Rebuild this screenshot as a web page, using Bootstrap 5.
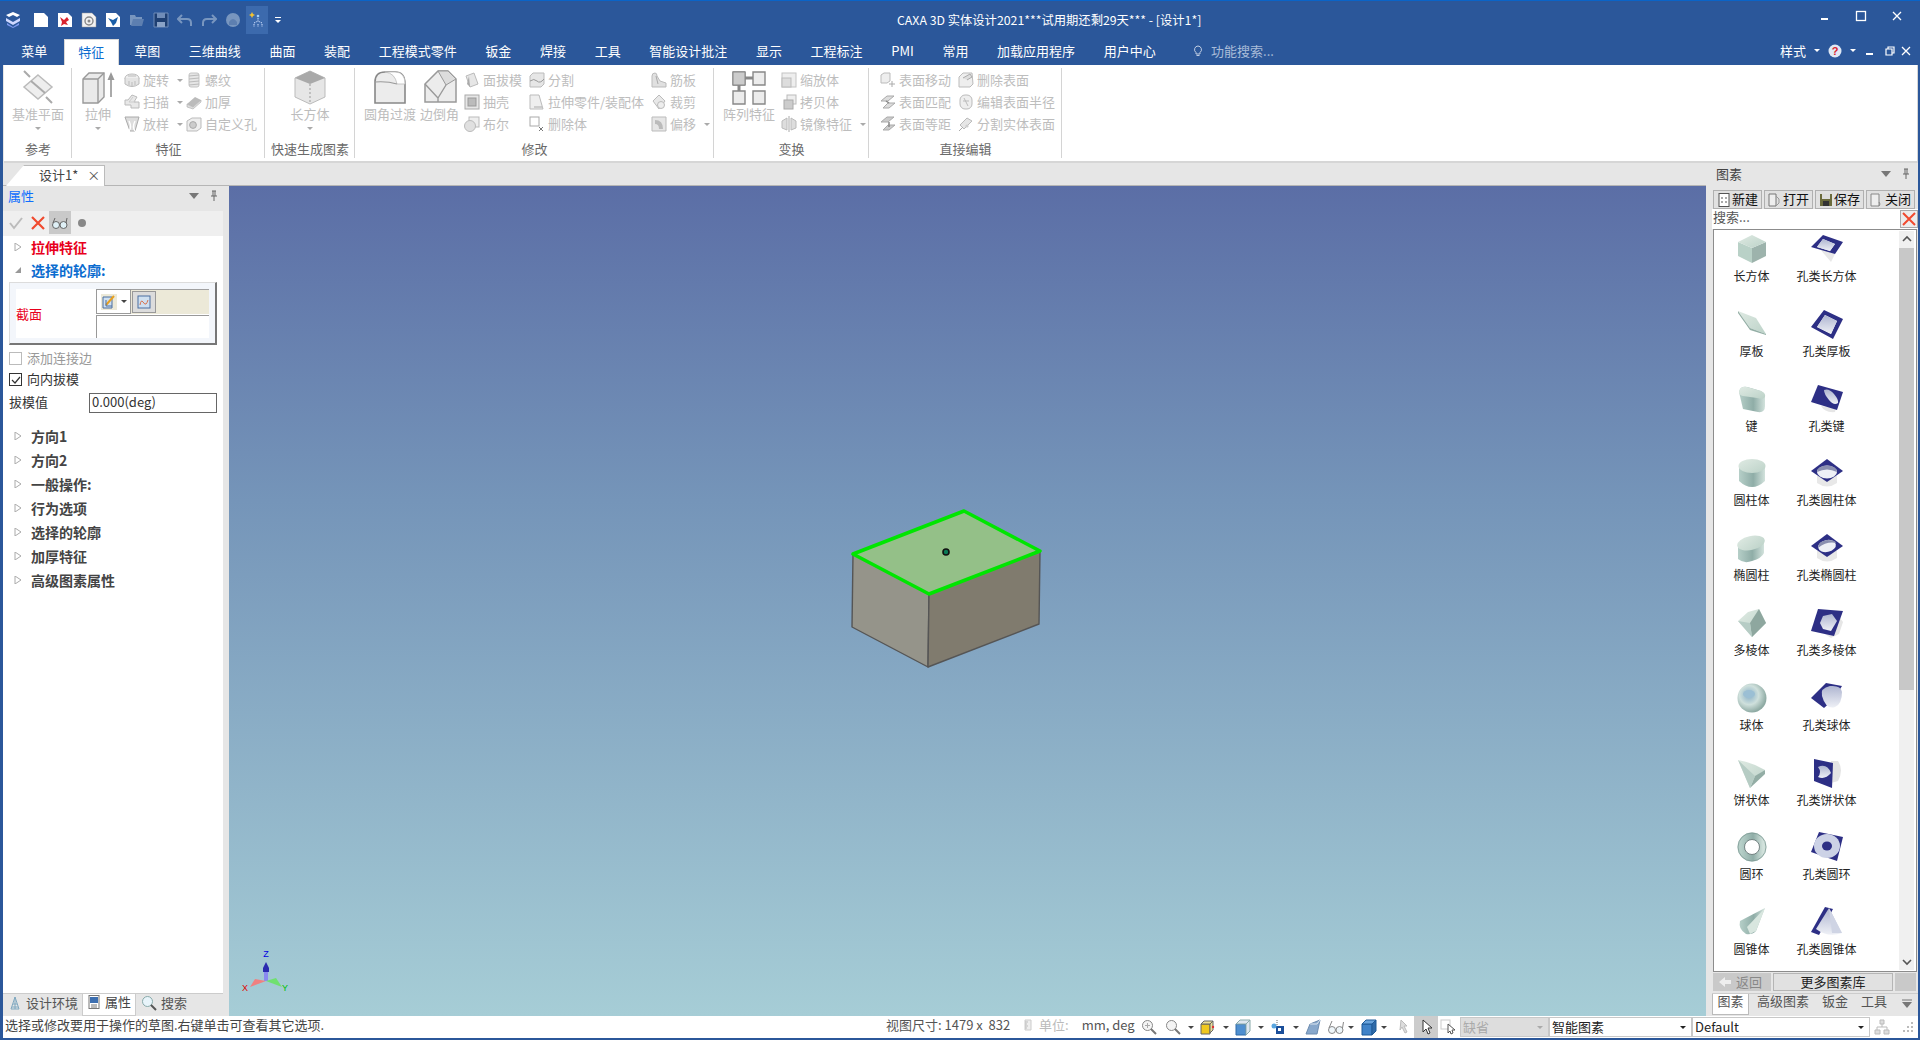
<!doctype html>
<html lang="zh">
<head>
<meta charset="utf-8">
<title>CAXA 3D</title>
<link href="https://cdn.jsdelivr.net/npm/bootstrap@5.3.0/dist/css/bootstrap.min.css" rel="stylesheet">
<style>
html,body{height:100%;margin:0;overflow:hidden}
body{font-family:"Noto Sans CJK SC","Noto Sans",sans-serif;font-size:13px;line-height:18px;color:#444;background:#e6e6e6}
.appwin{height:1040px;width:1920px;border-left:3px solid #2b579a;border-right:2px solid #2b579a;border-bottom:2px solid #2b579a}
svg{display:block;flex:none}
.i12{width:12px;height:12px}.i14{width:14px;height:14px}.i16{width:16px;height:16px}.i18{width:18px;height:18px}.i20{width:20px;height:20px}.i30{width:30px;height:30px}.i32{width:32px;height:30px}.i36{width:36px;height:36px}
.tribar{width:0;height:0;border-left:3px solid transparent;border-right:3px solid transparent;border-top:3px solid currentColor;display:block;flex:none}
.titlebar{height:39px;background:#2b579a;border-top:1px solid #0a64c8;color:#fff;margin-left:-3px;margin-right:-2px}
.qat{width:897px;padding-left:0}
.qatcell{width:24px;height:28px;display:flex;align-items:center;justify-content:center;flex:none}
.qatcell.logo{width:25px;margin-right:4px}
.qatcell.hot{background:#3c6aad;width:22px;margin:0 1px}
.qatmore{width:18px;gap:2px;flex-direction:column}
.qbar{width:6px;height:1px;background:#fff;display:block}
.wtitle{font-size:12.3px;white-space:nowrap}
.winbtns{padding-right:5px;margin-bottom:8px}
.winbtn{width:36px;display:flex;justify-content:center}
.tabbar{height:26px;background:#2b579a;color:#fff;padding-left:8px;gap:2px;margin-left:-3px;margin-right:-2px}
.rtab{padding:0 13.32px;height:26px;line-height:23px;white-space:nowrap;color:#fff}
.rtab.on{background:#fff;color:#0b6ccf;margin-left:1px;border:1px solid #d8d8d8;border-bottom:0;padding:0 13.6px}
.tipsearch{margin-left:21px;color:#a9bcd8;gap:7px;padding-bottom:3px}
.tabright{padding-right:8px;padding-bottom:3px}
.ribbon{height:98px;background:#fff;border-bottom:2px solid #d6d6d6;margin-left:1px;border-right:1px solid #d6d6d6;flex:none}
.rgroup{display:flex;flex-direction:column;position:relative;flex:none;height:96px;color:#bdbdbd}
.rgroup::after{content:"";position:absolute;right:0;top:3px;bottom:3px;width:1px;background:#d4d4d4}
.rbody{height:74px;display:flex;padding-top:4px}
.rlabel{height:20px;line-height:20px;text-align:center;color:#6a6a6a}
.g1{width:68px}.g2{width:193px}.g3{width:90px}.g4{width:359px}.g5{width:155px}.g6{width:193px}
.g4 .rbody,.g5 .rbody{padding-left:9px}.g6 .rbody{padding-left:11px}
.bigbtn{display:flex;flex-direction:column;align-items:center;flex:none;white-space:nowrap}
.bigbtn .tribar{margin-top:4px;color:#aaa}
.bw68{width:68px}.bw52{width:52px}.bw90{width:90px}.bw39{width:39px;margin:0 5px 0 4px}.bw52b{width:52px;margin-right:6px}
.bigcap{height:18px;line-height:18px}
.scol{flex:none}
.sw62{width:62px}.sw65{width:65px}.sw122{width:122px}.sw78{width:78px}
.srow{height:22px;display:flex;align-items:center;gap:3px;white-space:nowrap}
.srow .tribar{margin-left:5px;color:#aaa}
.docstrip{height:23px;background:#e6e6e6;padding-right:16px;flex:none;border-bottom:1px solid #b5b5b5}
.doctab{width:99px;height:21px;margin-top:2px;margin-left:3px;background:#fff;border:1px solid #bbb;border-bottom:0;border-left:0;position:relative;color:#444;padding-left:33px;line-height:18px;clip-path:polygon(18px 0,100% 0,100% 100%,0 100%)}
.doctabx{margin-left:9px;color:#555}
.mainrow{height:830px;flex:none}
.leftpane{width:220px;flex:none;background:#e6e6e6}
.panehead{height:25px;background:#e6e6e6;padding:0 3px 5px 5px;flex:none}
.panetools{height:25px;background:#efefef;padding:0 0 2px 2px;flex:none}
.tcell{width:22px;height:23px;display:flex;align-items:center;justify-content:center}
.tcell.hot{background:#c9c9c9}
.leftbody{flex-grow:1;background:#fff}
.secrow{height:24px;display:flex;align-items:center;padding:0 0 2px 11px;gap:9px;font-weight:700;font-size:14px}
.secrow svg{width:8px;height:8px}
.sec-r{color:#e8001c}.sec-b{color:#0b6ccf;height:22px}
.profbox{height:63px;margin:0 6px;border:1px solid #dcdcdc;border-right:2px solid #777;border-bottom:2px solid #777;background:#f3f6fb;padding:6px 6px 5px 6px}
.profin{height:100%;background:#fff}
.proflab{width:80px;color:#e8001c;display:flex;align-items:center}
.profsel{flex-grow:1;display:flex;flex-direction:column}
.proftop{height:25px;background:#ece9d8;border-top:1px solid #a0a0a0;display:flex;gap:1px}
.profbtn{width:35px;background:#fff;border:1px solid #9a9a9a;display:flex;align-items:center;justify-content:center;gap:4px;margin-top:-1px}
.profbtn2{width:24px;height:22px;background:#dcdcdc;border:1px solid #999;display:flex;align-items:center;justify-content:center;margin-top:1px}
.profin2{flex-grow:1;border-top:1px solid #999;border-left:1px solid #999;margin-top:1px}
.chkrow{height:21px;display:flex;align-items:center;padding-left:6px;gap:5px;color:#333}
.chkrow .chktx{margin-bottom:2px}
.chkfirst{margin-top:3px}
.chkbx{width:13px;height:13px;border:1px solid #333;background:#fff;display:flex;align-items:center;justify-content:center}
.chkoff{border-color:#bbb}.txoff{color:#999}
.draftrow{height:21px;display:flex;align-items:center;padding-left:6px;margin-top:2px;margin-bottom:12px;color:#333}
.draftlab{width:80px;margin-bottom:2px}
.draftin.form-control{width:128px;height:20px;min-height:0;border:1px solid #666;border-radius:0;padding:0 2px 2px;font-size:13px;line-height:16px;color:#333;font-family:inherit;background:#fff}
.panetabs{height:23px;background:#e6e6e6;border-top:1px solid #ccc;flex:none;color:#555}
.ptab{height:22px;display:flex;align-items:center;gap:4px;padding:0 5px 5px}
.ptab.first{padding-right:4px}
.ptab.on{background:#fff;border:1px solid #ccc;border-top:0;color:#444;padding:0 4px 5px}
.canvasgap{width:6px;flex:none;background:#e6e6e6}
.viewport3d{width:1477px;flex:none;background:linear-gradient(#5b6ea6,#7595b9 38%,#a6cdd6)}
.viewport3d svg{width:1477px;height:830px}
.rightpane{width:212px;flex:none;background:#e6e6e6;margin-top:-23px;position:relative;padding-left:6px}
.rhead{height:23px;padding:0 6px 1px 4px;color:#444;flex:none}
.libbtns{height:19px;gap:2px;padding-left:1px;padding-right:1px;flex:none;margin-top:4px}
.libbtn.btn{width:49px;height:19px;padding:0 0 3px;border-radius:0;border:1px solid #b0b0b0;background:#e1e1e1;color:#111;font-size:13px;line-height:15px;display:flex;align-items:center;justify-content:center;gap:1px;font-family:inherit}
.libbtn.btn svg{margin-top:3px}
.libsearch{height:20px;background:#fff;flex:none;padding-left:1px;position:relative;color:#555}
.libsearch>span:first-child{margin-bottom:4px}
.libx{width:18px;height:18px;border:1px solid #aaa;background:#ececec;display:flex;align-items:center;justify-content:center}
.libbox{height:743px;border:1px solid #8c8c8c;background:#fff;flex:none;margin-left:1px;margin-right:1px;position:relative}
.libgrid{display:grid;grid-template-columns:75px 75px;grid-auto-rows:74.8px;width:185px;padding-top:4px}
.libcell{display:flex;flex-direction:column;align-items:center;color:#222;font-size:12px;white-space:nowrap}
.libcell span{display:block;margin-top:3px}
.vscroll{width:15px;background:#f0f0f0;flex:none;margin-right:2px;margin-top:1px;margin-bottom:1px}
.vsbtn{height:16px;display:flex;align-items:center;justify-content:center}
.vsthumb{height:442px;background:#c8c8c8;margin-top:1px}
.libfoot{height:20px;gap:2px;flex:none;margin:1px 1px 0}
.backbtn{width:58px;height:18px;background:#c9c9c9;color:#888;padding-left:5px;gap:4px;flex:none}
.morebtn.btn{width:120px;height:18px;padding:0;border-radius:0;border:1px solid #b5b5b5;background:#e1e1e1;color:#222;font-size:13px;line-height:16px;font-family:inherit}
.plainb{width:21px;height:18px;background:#c9c9c9}
.rtabs{height:22px;flex:none;color:#555;gap:13px;border-top:1px solid #ccc;padding-right:5px}
.rtabx{height:21px;line-height:14px}
.rtabx.on{background:#fff;border:1px solid #bbb;border-top:0;width:37px;text-align:center;margin-right:-5px}
.statbar{height:22px;background:#fff;flex:none;color:#444;white-space:nowrap;position:relative}
.stext{width:883px;padding-left:2px;color:#444;flex:none;margin-bottom:4px}
.ssize{width:136px;flex:none;color:#555;margin-bottom:4px}
.sunit{width:117px;gap:5px;color:#bbb;flex:none;margin-bottom:4px}
.sunit b{font-weight:400;color:#555;margin-left:8px}
.sic{width:20px;height:22px;display:flex;align-items:center;justify-content:center;flex:none}
.sic.gap3{margin-left:3px}.sic.gap4{margin-left:4px}
.sar{width:15px;height:22px;display:flex;align-items:center;justify-content:center;flex:none;color:#444}
.sar.tiny{width:10px}
.sact{width:24px;height:22px;background:#ccc;display:flex;align-items:center;justify-content:center;margin-left:1px;flex:none}
.scmb{height:20px;border:1px solid #c8c8c8;background:#fff;display:flex;align-items:center;padding:0 5px 0 2px;justify-content:space-between;flex:none;color:#222}
.c1{width:89px;background:#ddd;color:#aaa;margin-left:2px}.c2{width:143px}.c3{width:178px}
.stail{gap:8px;padding-left:4px}
</style>
</head>
<body>
<svg width="0" height="0" class="position-absolute">
<defs>
<linearGradient id="gt" x1="0" y1="0" x2="1" y2="1"><stop offset="0" stop-color="#dfeae3"/><stop offset="1" stop-color="#bcd2c8"/></linearGradient>
<linearGradient id="gs" x1="0" y1="0" x2="1" y2="0"><stop offset="0" stop-color="#b6cfc8"/><stop offset=".55" stop-color="#8fada7"/><stop offset="1" stop-color="#d2e2dc"/></linearGradient>
<radialGradient id="gb" cx=".4" cy=".4" r=".6"><stop offset="0" stop-color="#86aec6"/><stop offset=".55" stop-color="#cfe0dc"/><stop offset="1" stop-color="#8eaaa3"/></radialGradient>
<linearGradient id="gh" x1="0" y1="0" x2="0" y2="1"><stop offset="0" stop-color="#aeb5d0"/><stop offset="1" stop-color="#eef0f6"/></linearGradient>

<symbol id="b-plane" viewBox="0 0 36 36"><path d="M4 2l6 6M32 34l-6-6" stroke="#aaa" stroke-width="2"/><path d="M18 6L32 18 18 30 4 18z" fill="#eee" stroke="#bbb" stroke-width="1.5"/><path d="M11 12l14 12" stroke="#aaa" stroke-width="2"/></symbol>
<symbol id="b-ext" viewBox="0 0 36 36"><path d="M3 10l6-6h15v24l-6 6H3z" fill="#eaeaea" stroke="#999" stroke-width="1.4"/><path d="M3 10h15v24M18 10l6-6" fill="none" stroke="#999" stroke-width="1.4"/><path d="M31 28V10" stroke="#aaa" stroke-width="2"/><path d="M31 3l3.500 8h-7z" fill="#999"/></symbol>
<symbol id="b-box" viewBox="0 0 36 36"><path d="M18 2L33 9v19l-15 7-15-7V9z" fill="#e6e6e6" stroke="#bbb"/><path d="M18 2L33 9 18 15 3 9z" fill="#a9a9a9"/><path d="M18 15v20" stroke="#999" stroke-dasharray="2 2"/></symbol>
<symbol id="b-fillet" viewBox="0 0 36 36"><path d="M3 34V13Q3 3 13 3h10q10 0 10 12v19z" fill="#ececec" stroke="#888" stroke-width="1.6"/><path d="M13 3q10 1 12 12l8 0Q33 3 23 3z" fill="#fff" stroke="#bbb" stroke-width=".8"/><path d="M3 13q12-1 22 2" fill="none" stroke="#999" stroke-width="1.2"/></symbol>
<symbol id="b-chamf" viewBox="0 0 36 36"><path d="M3 15L16 2h10l8 8v23H3z" fill="#ececec" stroke="#999" stroke-width="1.5"/><path d="M16 2l8 14 10-6-8-8z" fill="#dcdcdc" stroke="#999"/><path d="M3 15l13 14v4M24 16l-8 13" fill="none" stroke="#999" stroke-width="1.4"/></symbol>
<symbol id="b-patt" viewBox="0 0 36 36"><path d="M2 3h12v13H2zM22 3h12v13H22zM2 22h12v13H2zM22 22h12v13H22z" fill="#ececec" stroke="#888" stroke-width="1.4"/><path d="M2 3h12v13H2z" fill="#ccc" stroke="#888"/><path d="M14 9h8M8 16v6" stroke="#888" stroke-width="3"/></symbol>

<symbol id="s-rev" viewBox="0 0 16 16"><ellipse cx="8" cy="6" rx="7" ry="4" fill="#eee" stroke="#bbb"/><path d="M1 6v6q7 5 14 0V6" fill="#e4e4e4" stroke="#bbb"/><path d="M4 4h8M5 9v4M8 10v4M11 9v4" stroke="#bbb"/></symbol>
<symbol id="s-swp" viewBox="0 0 16 16"><path d="M8 1l5 2-3 5h5v6H7v-3H1V6h3z" fill="#e8e8e8" stroke="#bbb"/><path d="M9 3L5 8h7" fill="none" stroke="#ccc"/></symbol>
<symbol id="s-lft" viewBox="0 0 16 16"><path d="M1 1h14l-4 14H6z" fill="#ddd" stroke="#aaa"/><path d="M5 5q3 6 0 10M11 5q-3 6 0 10" stroke="#fff" fill="none" stroke-width="1.4"/></symbol>
<symbol id="s-thr" viewBox="0 0 16 16"><rect x="3" y="1" width="10" height="14" rx="2" fill="#e6e6e6" stroke="#c4c4c4"/><path d="M3 4l10-1M3 7l10-1M3 10l10-1M3 13l10-1" stroke="#bbb"/></symbol>
<symbol id="s-thk" viewBox="0 0 16 16"><path d="M1 10l8-7 6 3-8 7z" fill="#bbb"/><path d="M1 10v3l6 2 8-7V6l-8 7z" fill="#ddd" stroke="#aaa" stroke-width=".6"/></symbol>
<symbol id="s-hole" viewBox="0 0 16 16"><path d="M1 5l5-3h9v10l-4 3H1z" fill="#eee" stroke="#bbb"/><circle cx="7" cy="9" r="3.400" fill="#ccc" stroke="#aaa"/></symbol>
<symbol id="s-drft" viewBox="0 0 16 16"><path d="M2 4l8-3 4 11-8 3z" fill="#e6e6e6" stroke="#bbb"/><path d="M5 4l-2 8 3 3" fill="#aaa"/></symbol>
<symbol id="s-shl" viewBox="0 0 16 16"><rect x="1" y="1" width="14" height="14" fill="#e6e6e6" stroke="#aaa"/><rect x="4" y="4" width="8" height="8" fill="#bbb" stroke="#999"/></symbol>
<symbol id="s-bool" viewBox="0 0 16 16"><rect x="5" y="1" width="10" height="10" fill="#eee" stroke="#bbb"/><circle cx="6" cy="10" r="5.500" fill="#e0e0e0" stroke="#bbb"/></symbol>
<symbol id="s-spl" viewBox="0 0 16 16"><path d="M1 4l3-3h11v11l-3 3H1z" fill="#e6e6e6" stroke="#bbb"/><path d="M1 9q4-3 7 0t7-2" fill="none" stroke="#999"/></symbol>
<symbol id="s-asm" viewBox="0 0 16 16"><path d="M1 1h9l4 14H1z" fill="#eee" stroke="#bbb"/><path d="M5 13h8" stroke="#aaa"/></symbol>
<symbol id="s-del" viewBox="0 0 16 16"><rect x="1" y="1" width="9" height="9" fill="#fff" stroke="#aaa"/><path d="M10 11l4 4M14 11l-4 4" stroke="#777"/></symbol>
<symbol id="s-rib" viewBox="0 0 16 16"><path d="M1 15V4q0-3 3-3 2 0 2 3l3 5 6 2v4z" fill="#e0e0e0" stroke="#bbb"/><path d="M5 4l2 8" stroke="#aaa"/></symbol>
<symbol id="s-trm" viewBox="0 0 16 16"><path d="M8 1l6 6-6 8-6-8z" fill="#e8e8e8" stroke="#bbb"/><circle cx="10" cy="11" r="3.500" fill="#eee" stroke="#bbb"/></symbol>
<symbol id="s-off" viewBox="0 0 16 16"><path d="M1 1h14v14H1z" fill="#e6e6e6" stroke="#bbb"/><path d="M4 4q8 0 8 9H8q0-5-4-5z" fill="#bbb"/></symbol>
<symbol id="s-scl" viewBox="0 0 16 16"><rect x="1" y="1" width="14" height="14" fill="#eee" stroke="#c4c4c4"/><rect x="1" y="6" width="9" height="9" fill="#ddd" stroke="#bbb"/></symbol>
<symbol id="s-cpy" viewBox="0 0 16 16"><rect x="6" y="1" width="9" height="9" fill="#eee" stroke="#bbb"/><rect x="3" y="6" width="9" height="9" fill="#ccc" stroke="#aaa"/></symbol>
<symbol id="s-mir" viewBox="0 0 16 16"><path d="M1 5l5-3v12l-5-2zM15 5l-5-3v12l5-2z" fill="#ddd" stroke="#bbb"/><path d="M8 0v16" stroke="#aaa"/></symbol>
<symbol id="s-mov" viewBox="0 0 16 16"><path d="M1 3l3-2h6v8l-3 2H1z" fill="#eee" stroke="#bbb"/><path d="M9 12h6M12 9v6" stroke="#aaa"/></symbol>
<symbol id="s-mat" viewBox="0 0 16 16"><path d="M1 7l6-5h7L8 7zM3 14l5-5h7l-6 5z" fill="#ddd" stroke="#aaa"/><path d="M6 7l3 2" stroke="#888" stroke-width="1.5"/></symbol>
<symbol id="s-equ" viewBox="0 0 16 16"><path d="M1 6l6-5h7L8 6zM3 14l5-5h7l-6 5z" fill="#ccc" stroke="#aaa"/><path d="M9 6v5" stroke="#888" stroke-width="1.5"/></symbol>
<symbol id="s-dlf" viewBox="0 0 16 16"><path d="M1 5l4-4h9l1 11-3 3H1z" fill="#eee" stroke="#bbb"/><path d="M5 6l7-4 2 3-5 3" fill="#ddd" stroke="#aaa"/></symbol>
<symbol id="s-rad" viewBox="0 0 16 16"><rect x="2" y="1" width="12" height="14" rx="5" fill="#eee" stroke="#bbb"/><path d="M6 4l4 8M5 7h6" stroke="#bbb"/></symbol>
<symbol id="s-spf" viewBox="0 0 16 16"><path d="M2 9l7-7 5 3-8 8z" fill="#e6e6e6" stroke="#bbb"/><path d="M1 15l4-4" stroke="#aaa"/><circle cx="9" cy="10" r="1.600" fill="#ccc"/></symbol>

<symbol id="g1" viewBox="0 0 30 30"><path d="M1 8L15 14v15L1 22z" fill="#b9d1c7"/><path d="M15 14l14-6v14l-14 7z" fill="#9db3ac"/><path d="M15 1L29 8 15 14 1 8z" fill="url(#gt)"/></symbol>
<symbol id="g2" viewBox="0 0 30 30"><path d="M1 2l18 7 10 16-16-6z" fill="url(#gt)"/><path d="M1 2v2l12 17 16 5v-1l-16-6z" fill="#93aea5"/></symbol>
<symbol id="g3" viewBox="0 0 30 30"><path d="M2 8q1-6 8-5l14 4q4 2 4 7v8q0 7-7 6l-15-3z" fill="url(#gs)"/><path d="M2 8q1-6 8-5l14 4q5 2 4 6-1 3-8 1L6 12Q2 11 2 8z" fill="url(#gt)"/></symbol>
<symbol id="g4" viewBox="0 0 30 30"><path d="M2 8v15q13 12 26 0V8z" fill="url(#gs)"/><ellipse cx="15" cy="8" rx="13.500" ry="7" fill="url(#gt)"/></symbol>
<symbol id="g5" viewBox="0 0 30 30"><path d="M1 14v12q6 5 14 2 10-3 12-8V5z" fill="url(#gs)"/><ellipse cx="14" cy="10" rx="14" ry="7" transform="rotate(-12 14 10)" fill="url(#gt)"/></symbol>
<symbol id="g6" viewBox="0 0 30 30"><path d="M1 13L11 4 22 1l7 14-14 14z" fill="url(#gt)"/><path d="M22 1l7 14-14 14-2-14z" fill="#8ea79f"/><path d="M13 15L1 13l14 16z" fill="#b6ccc5"/></symbol>
<symbol id="g7" viewBox="0 0 30 30"><circle cx="15" cy="15" r="14.500" fill="url(#gb)"/><ellipse cx="12" cy="11" rx="6" ry="4" fill="#9bbfd4"/></symbol>
<symbol id="g8" viewBox="0 0 30 30"><path d="M1 2q16 3 27 10L18 19 13 30z" fill="url(#gt)"/><path d="M28 12v4l-15 14 5-12z" fill="#93ada5"/><path d="M1 2l12 28 5-12z" fill="#b6ccc4"/></symbol>
<symbol id="g9" viewBox="0 0 30 30"><circle cx="15" cy="15" r="11" fill="none" stroke="url(#gs)" stroke-width="7"/><circle cx="15" cy="15" r="14" fill="none" stroke="#7f9a95" stroke-width=".8"/><circle cx="15" cy="15" r="7.500" fill="#fff" stroke="#566" stroke-width=".8"/></symbol>
<symbol id="g10" viewBox="0 0 30 30"><path d="M28 1L3 14q-2 8 6 13 6 1 10-3z" fill="url(#gs)"/><path d="M28 1L10 20l3 7 6-3z" fill="#d8e6df"/></symbol>

<symbol id="h1" viewBox="0 0 32 30"><path d="M8 14l12 14 4-8z" fill="#e8e8e8"/><path d="M12 1l20 7-8 12L0 13z M12 5L6 13l13 4 5-7z" fill="#2d2f85" fill-rule="evenodd"/><path d="M12 5L6 13l13 4 5-7z" fill="url(#gh)"/></symbol>
<symbol id="h2" viewBox="0 0 32 30"><path d="M13 1l19 9-10 20L0 18z M14 6L6 18l14 7 6-13z" fill="#2d2f85" fill-rule="evenodd"/><path d="M14 6L6 18l14 7 6-13z" fill="url(#gh)"/></symbol>
<symbol id="h3" viewBox="0 0 32 30"><path d="M10 22q4 7 14 6l1-4z" fill="#e6e6e6"/><path d="M7 1l25 7-6 18L0 18z" fill="#2d2f85"/><path d="M13 6q5-2 10 4t4 9q-4 3-9-3T13 6z" fill="url(#gh)"/></symbol>
<symbol id="h4" viewBox="0 0 32 30"><path d="M6 18v7q10 7 20 0v-7z" fill="#e8e8e8"/><path d="M16 1l16 12-16 11L0 13z" fill="#2d2f85"/><ellipse cx="16" cy="14" rx="10" ry="6.500" fill="#eef0f6"/><path d="M6 14q0-6 10-6.500 10 .5 10 6.500-10-5-20 0z" fill="#8a8fb0"/></symbol>
<symbol id="h5" viewBox="0 0 32 30"><path d="M6 18v7q10 7 20 0v-7z" fill="#e8e8e8"/><path d="M16 1l16 12-16 11L0 13z" fill="#2d2f85"/><ellipse cx="16" cy="13" rx="9" ry="6" transform="rotate(-12 16 13)" fill="#eef0f6"/><path d="M7 15q0-7 9-8 9 0 9 3-9-2-18 5z" fill="#8a8fb0"/></symbol>
<symbol id="h6" viewBox="0 0 32 30"><path d="M26 6l6 8-4 12-8 4-6-4z" fill="#e6e6e6"/><path d="M7 1l25 2-9 25L0 23z" fill="#2d2f85"/><path d="M12 8l9-2 5 7-6 10-8-2-3-6z" fill="url(#gh)"/></symbol>
<symbol id="h7" viewBox="0 0 32 30"><path d="M0 15L15 0l16 3-8 13-10 9z" fill="#2d2f85"/><path d="M11 13q-2-8 8-10 11-1 12 6 0 12-7 15-9 3-13-11z" fill="url(#gh)"/></symbol>
<symbol id="h8" viewBox="0 0 32 30"><path d="M20 3h7q6 9 0 20l-7 2z" fill="#e4e4e4"/><path d="M3 1l19 4-1 25-18-7z" fill="#2d2f85"/><path d="M7 9q9-4 13 6-6 7-13 4 4-5 0-10z" fill="url(#gh)"/></symbol>
<symbol id="h9" viewBox="0 0 32 30"><path d="M8 0l24 5-6 24L0 20z" fill="#2d2f85"/><ellipse cx="16" cy="14" rx="13" ry="12" fill="#ccd2e6"/><ellipse cx="16" cy="14" rx="5" ry="4.500" fill="#2d2f85"/></symbol>
<symbol id="h10" viewBox="0 0 32 30"><path d="M0 25L14 0l8 2L8 28z" fill="#2d2f85"/><path d="M18 1L5 22q12 9 26 4z" fill="url(#gh)"/><path d="M18 1l13 25-10 0z" fill="#cfd4e4"/></symbol>
</defs>
</svg>

<div class="appwin d-flex flex-column">
  <div class="titlebar d-flex align-items-center flex-none">
    <div class="qat d-flex align-items-center">
      <div class="qatcell logo"><svg class="i18" viewBox="0 0 18 18"><path d="M9 1l7 3-3 2-4-2-4 2-3-2z" fill="#fff"/><path d="M2 7l7 4 7-4v3l-7 4-7-4z" fill="#cfd8ff"/><path d="M3 12l6 4 6-4v2l-6 3-6-3z" fill="#7f9bef"/></svg></div>
      <div class="qatcell"><svg class="i16" viewBox="0 0 16 16"><path d="M1 1h10l4 4v10H1z" fill="#fff"/></svg></div>
      <div class="qatcell"><svg class="i16" viewBox="0 0 16 16"><path d="M1 1h10l4 4v10H1z" fill="#fff"/><path d="M3 5l4 3 3-3 2 3-3 2 2 3-4-1-3 2 1-4z" fill="#d9232e"/></svg></div>
      <div class="qatcell"><svg class="i16" viewBox="0 0 16 16"><path d="M1 1h10l4 4v10H1z" fill="#f2f2f2" stroke="#999" stroke-width=".5"/><circle cx="8" cy="9" r="4" fill="none" stroke="#888" stroke-width="1.4"/><circle cx="8" cy="9" r="1.500" fill="#888"/></svg></div>
      <div class="qatcell"><svg class="i16" viewBox="0 0 16 16"><path d="M1 1h10l4 4v10H1z" fill="#fff"/><path d="M3 6l5 2 5-3-2 6-3 3-2-4z" fill="#1b5fa8"/></svg></div>
      <div class="qatcell"><svg class="i16" viewBox="0 0 16 16"><path d="M1 3h5l1 2h6v2H5l-2 6H1z" fill="#7896bf"/><path d="M4 7h11l-2 7H2z" fill="#5d7fb0"/></svg></div>
      <div class="qatcell"><svg class="i16" viewBox="0 0 16 16"><path d="M1 1h14v14H1z" fill="#1e3f72" stroke="#6f8cb8"/><path d="M4 1h8v5H4z" fill="#6f8cb8"/><path d="M4 10h8v5H4z" fill="#8aa3c7"/></svg></div>
      <div class="qatcell"><svg class="i16" viewBox="0 0 16 16"><path d="M5 3L1 7l4 4" fill="none" stroke="#7896bf" stroke-width="2"/><path d="M2 7h8q4 0 4 4v3" fill="none" stroke="#7896bf" stroke-width="2"/></svg></div>
      <div class="qatcell"><svg class="i16" viewBox="0 0 16 16"><path d="M11 3l4 4-4 4" fill="none" stroke="#7896bf" stroke-width="2"/><path d="M14 7H6q-4 0-4 4v3" fill="none" stroke="#7896bf" stroke-width="2"/></svg></div>
      <div class="qatcell"><svg class="i16" viewBox="0 0 16 16"><circle cx="8" cy="8" r="7" fill="#7896bf"/><path d="M4 10q4-6 8 0v3H4z" fill="#5d7fb0"/></svg></div>
      <div class="qatcell hot"><svg class="i18" viewBox="0 0 18 18"><path d="M4 1l1 2 2 1-2 1-1 2-1-2-2-1 2-1z" fill="#f2c230"/><path d="M10 7v3M6 13v3M10 13v3M14 13v3M6 12l4-2 4 2" stroke="#cfe0ff" fill="none" stroke-dasharray="1.5 1"/><circle cx="10" cy="5" r="1.300" fill="#9fd0ff"/></svg></div>
      <div class="qatcell qatmore"><span class="qbar"></span><span class="tribar"></span></div>
    </div>
    <div class="wtitle">CAXA 3D 实体设计2021***试用期还剩29天*** - [设计1*]</div>
    <div class="winbtns d-flex align-items-center ms-auto">
      <div class="winbtn"><svg class="i12" viewBox="0 0 12 12"><path d="M2 9h7" stroke="#fff" stroke-width="2"/></svg></div>
      <div class="winbtn"><svg class="i12" viewBox="0 0 12 12"><rect x="1.500" y="1.500" width="9" height="9" fill="none" stroke="#fff" stroke-width="1.300"/></svg></div>
      <div class="winbtn"><svg class="i12" viewBox="0 0 12 12"><path d="M2 2l8 8M10 2l-8 8" stroke="#fff" stroke-width="1.300"/></svg></div>
    </div>
  </div>

  <div class="tabbar d-flex align-items-start flex-none">
    <div class="rtab">菜单</div><div class="rtab on">特征</div><div class="rtab">草图</div><div class="rtab">三维曲线</div><div class="rtab">曲面</div><div class="rtab">装配</div><div class="rtab">工程模式零件</div><div class="rtab">钣金</div><div class="rtab">焊接</div><div class="rtab">工具</div><div class="rtab">智能设计批注</div><div class="rtab">显示</div><div class="rtab">工程标注</div><div class="rtab">PMI</div><div class="rtab">常用</div><div class="rtab">加载应用程序</div><div class="rtab">用户中心</div>
    <div class="tipsearch d-flex align-items-center h-100"><svg class="i12" viewBox="0 0 12 12"><path d="M6 1a3.600 3.600 0 0 1 2 6.500V9H4V7.500A3.600 3.600 0 0 1 6 1zM4.500 10.500h3" fill="none" stroke="#c2cfe4"/></svg><span>功能搜索...</span></div>
    <div class="tabright d-flex align-items-center ms-auto h-100">
      <span>样式</span>
      <span class="tribar mx-2"></span>
      <svg class="i14" viewBox="0 0 14 14"><circle cx="7" cy="7" r="6.500" fill="#dfe8f4"/><text x="7" y="11" text-anchor="middle" font-size="11" font-weight="700" fill="#d9232e" font-family="Liberation Sans">?</text></svg>
      <span class="tribar mx-2"></span>
      <svg class="i12" viewBox="0 0 12 12"><path d="M2 9h7" stroke="#fff" stroke-width="2"/></svg>
      <svg class="i12 ms-2" viewBox="0 0 12 12"><path d="M2 4h6v6H2zM4 4V2h6v6H8" fill="none" stroke="#fff" stroke-width="1.200"/></svg>
      <svg class="i12 ms-1" viewBox="0 0 12 12"><path d="M2 2l8 8M10 2l-8 8" stroke="#fff" stroke-width="1.300"/></svg>
    </div>
  </div>

  <div class="ribbon d-flex">
    <div class="rgroup g1"><div class="rbody">
      <div class="bigbtn bw68"><svg class="i36"><use href="#b-plane"/></svg><div class="bigcap">基准平面</div><span class="tribar"></span></div>
    </div><div class="rlabel">参考</div></div>

    <div class="rgroup g2"><div class="rbody">
      <div class="bigbtn bw52"><svg class="i36"><use href="#b-ext"/></svg><div class="bigcap">拉伸</div><span class="tribar"></span></div>
      <div class="scol sw62">
        <div class="srow"><svg class="i16"><use href="#s-rev"/></svg>旋转<span class="tribar"></span></div>
        <div class="srow"><svg class="i16"><use href="#s-swp"/></svg>扫描<span class="tribar"></span></div>
        <div class="srow"><svg class="i16"><use href="#s-lft"/></svg>放样<span class="tribar"></span></div>
      </div>
      <div class="scol">
        <div class="srow"><svg class="i16"><use href="#s-thr"/></svg>螺纹</div>
        <div class="srow"><svg class="i16"><use href="#s-thk"/></svg>加厚</div>
        <div class="srow"><svg class="i16"><use href="#s-hole"/></svg>自定义孔</div>
      </div>
    </div><div class="rlabel">特征</div></div>

    <div class="rgroup g3"><div class="rbody">
      <div class="bigbtn bw90"><svg class="i36"><use href="#b-box"/></svg><div class="bigcap">长方体</div><span class="tribar"></span></div>
    </div><div class="rlabel">快速生成图素</div></div>

    <div class="rgroup g4"><div class="rbody">
      <div class="bigbtn bw52"><svg class="i36"><use href="#b-fillet"/></svg><div class="bigcap">圆角过渡</div></div>
      <div class="bigbtn bw39"><svg class="i36"><use href="#b-chamf"/></svg><div class="bigcap">边倒角</div></div>
      <div class="scol sw65">
        <div class="srow"><svg class="i16"><use href="#s-drft"/></svg>面拔模</div>
        <div class="srow"><svg class="i16"><use href="#s-shl"/></svg>抽壳</div>
        <div class="srow"><svg class="i16"><use href="#s-bool"/></svg>布尔</div>
      </div>
      <div class="scol sw122">
        <div class="srow"><svg class="i16"><use href="#s-spl"/></svg>分割</div>
        <div class="srow"><svg class="i16"><use href="#s-asm"/></svg>拉伸零件/装配体</div>
        <div class="srow"><svg class="i16"><use href="#s-del"/></svg>删除体</div>
      </div>
      <div class="scol">
        <div class="srow"><svg class="i16"><use href="#s-rib"/></svg>筋板</div>
        <div class="srow"><svg class="i16"><use href="#s-trm"/></svg>裁剪</div>
        <div class="srow"><svg class="i16"><use href="#s-off"/></svg>偏移<span class="tribar"></span></div>
      </div>
    </div><div class="rlabel">修改</div></div>

    <div class="rgroup g5"><div class="rbody">
      <div class="bigbtn bw52b"><svg class="i36"><use href="#b-patt"/></svg><div class="bigcap">阵列特征</div></div>
      <div class="scol">
        <div class="srow"><svg class="i16"><use href="#s-scl"/></svg>缩放体</div>
        <div class="srow"><svg class="i16"><use href="#s-cpy"/></svg>拷贝体</div>
        <div class="srow"><svg class="i16"><use href="#s-mir"/></svg>镜像特征<span class="tribar"></span></div>
      </div>
    </div><div class="rlabel">变换</div></div>

    <div class="rgroup g6"><div class="rbody">
      <div class="scol sw78">
        <div class="srow"><svg class="i16"><use href="#s-mov"/></svg>表面移动</div>
        <div class="srow"><svg class="i16"><use href="#s-mat"/></svg>表面匹配</div>
        <div class="srow"><svg class="i16"><use href="#s-equ"/></svg>表面等距</div>
      </div>
      <div class="scol">
        <div class="srow"><svg class="i16"><use href="#s-dlf"/></svg>删除表面</div>
        <div class="srow"><svg class="i16"><use href="#s-rad"/></svg>编辑表面半径</div>
        <div class="srow"><svg class="i16"><use href="#s-spf"/></svg>分割实体表面</div>
      </div>
    </div><div class="rlabel">直接编辑</div></div>
  </div>

  <div class="docstrip d-flex justify-content-between align-items-start">
    <div class="doctab">设计1*<span class="doctabx">×</span></div>
    <div class="d-flex align-items-center h-100"><svg class="i12" viewBox="0 0 12 12"><path d="M1 3h10L6 9z" fill="#777"/></svg></div>
  </div>

  <div class="mainrow d-flex">
    <div class="leftpane d-flex flex-column">
      <div class="panehead d-flex align-items-center justify-content-between">
        <span class="text-primary">属性</span>
        <span class="d-flex align-items-center gap-2"><svg class="i12" viewBox="0 0 12 12"><path d="M1 3h10L6 9z" fill="#777"/></svg><svg class="i12" viewBox="0 0 12 12"><path d="M4 1h4M5 1v5M7 1v5M3 6h6M6 6v5" stroke="#666" fill="none"/></svg></span>
      </div>
      <div class="panetools d-flex align-items-center">
        <div class="tcell"><svg class="i14" viewBox="0 0 14 14"><path d="M1 7l4 5 8-10" fill="none" stroke="#bbb" stroke-width="2"/></svg></div>
        <div class="tcell"><svg class="i14" viewBox="0 0 14 14"><path d="M1 1l12 12M13 1L1 13" stroke="#f04a2f" stroke-width="2.200"/></svg></div>
        <div class="tcell hot"><svg class="i18" viewBox="0 0 18 18"><circle cx="5" cy="11" r="3.500" fill="#dff0f6" stroke="#666"/><circle cx="12.500" cy="11" r="3.500" fill="#dff0f6" stroke="#666"/><path d="M2 9l2-5M15 9l1-5M8.500 10h0.500" stroke="#666" fill="none"/></svg></div>
        <div class="tcell"><svg class="i12" viewBox="0 0 12 12"><circle cx="6" cy="6" r="4" fill="#888"/></svg></div>
      </div>
      <div class="leftbody">
        <div class="secrow sec-r"><svg viewBox="0 0 8 8"><path d="M1 0l6 4-6 4z" fill="#fff" stroke="#aaa"/></svg>拉伸特征</div>
        <div class="secrow sec-b"><svg viewBox="0 0 8 8"><path d="M1 7h6V1z" fill="#999"/></svg>选择的轮廓:</div>
        <div class="profbox">
          <div class="profin d-flex">
            <div class="proflab">截面</div>
            <div class="profsel">
              <div class="proftop">
                <div class="profbtn"><svg class="i16" viewBox="0 0 16 16"><rect width="16" height="16" fill="#ece9d8"/><path d="M2 3h9v11H2z" fill="#cfe0f0" stroke="#4b6ea0"/><path d="M5 11l8-9" stroke="#e8a020" stroke-width="2"/><path d="M5 6v6h6" fill="none" stroke="#4b6ea0"/></svg><span class="tribar"></span></div>
                <div class="profbtn2"><svg class="i14" viewBox="0 0 14 14"><rect x="1" y="1" width="12" height="12" fill="#cfe0f0" stroke="#4b6ea0"/><path d="M3 10q1-6 3-3t3 2 2-4" fill="none" stroke="#d8704a"/></svg></div>
              </div>
              <div class="profin2"></div>
            </div>
          </div>
        </div>
        <div class="chkrow chkfirst"><span class="chkbx chkoff"></span><span class="txoff chktx">添加连接边</span></div>
        <div class="chkrow"><span class="chkbx"><svg class="i12" viewBox="0 0 12 12"><path d="M2 6l3 3 5-6" fill="none" stroke="#333" stroke-width="1.200"/></svg></span><span class="chktx">向内拔模</span></div>
        <div class="draftrow"><span class="draftlab">拔模值</span><input class="form-control draftin" type="text" value="0.000(deg)"></div>
        <div class="secrow"><svg viewBox="0 0 8 8"><path d="M1 0l6 4-6 4z" fill="#fff" stroke="#aaa"/></svg>方向1</div>
        <div class="secrow"><svg viewBox="0 0 8 8"><path d="M1 0l6 4-6 4z" fill="#fff" stroke="#aaa"/></svg>方向2</div>
        <div class="secrow"><svg viewBox="0 0 8 8"><path d="M1 0l6 4-6 4z" fill="#fff" stroke="#aaa"/></svg>一般操作:</div>
        <div class="secrow"><svg viewBox="0 0 8 8"><path d="M1 0l6 4-6 4z" fill="#fff" stroke="#aaa"/></svg>行为选项</div>
        <div class="secrow"><svg viewBox="0 0 8 8"><path d="M1 0l6 4-6 4z" fill="#fff" stroke="#aaa"/></svg>选择的轮廓</div>
        <div class="secrow"><svg viewBox="0 0 8 8"><path d="M1 0l6 4-6 4z" fill="#fff" stroke="#aaa"/></svg>加厚特征</div>
        <div class="secrow"><svg viewBox="0 0 8 8"><path d="M1 0l6 4-6 4z" fill="#fff" stroke="#aaa"/></svg>高级图素属性</div>
      </div>
      <div class="panetabs d-flex">
        <div class="ptab first"><svg class="i14" viewBox="0 0 14 14"><path d="M7 1L3 13h8zM5 8h4M4 11h6M7 1v12" fill="none" stroke="#7fa8c0"/></svg>设计环境</div>
        <div class="ptab on"><svg class="i14" viewBox="0 0 14 14"><rect x="2" y="0.500" width="10" height="13" fill="#fff" stroke="#777"/><rect x="3" y="2" width="8" height="6" fill="#3d6fb0"/><path d="M4 10h6M4 12h6" stroke="#777"/></svg>属性</div>
        <div class="ptab"><svg class="i16" viewBox="0 0 16 16"><circle cx="6.500" cy="6.500" r="5" fill="#e8f4fa" stroke="#8aa"/><path d="M10 10l5 5" stroke="#555" stroke-width="2"/></svg>搜索</div>
      </div>
    </div>
    <div class="canvasgap"></div>
    <div class="viewport3d">
      <svg viewBox="0 0 1477 830">
        <path d="M624 368L623 441 699 481 700 408z" fill="#95948a" stroke="#555" stroke-width="1.400" stroke-linejoin="round"/>
        <path d="M700 408L699 481 810 438 811 365z" fill="#807b6e" stroke="#555" stroke-width="1.400" stroke-linejoin="round"/>
        <path d="M624 368L735 325 811 365 700 408z" fill="#94c088" stroke="#00e600" stroke-width="3.500" stroke-linejoin="round"/>
        <circle cx="717" cy="366" r="3" fill="#0a7a55" stroke="#111" stroke-width="1.600"/>
        <g>
          <path d="M37 784V795" stroke="#8a8af0" stroke-width="4"/>
          <path d="M37 776l3 6v4h-6v-4z" fill="#2a2ab0"/>
          <path d="M37 795L21 801 26 793z" fill="#f08080"/>
          <path d="M37 795L53 801 47 792z" fill="#70e070"/>
          <text x="37" y="771" text-anchor="middle" font-size="9" fill="#0000e0" font-family="Liberation Sans">Z</text>
          <text x="16" y="805" text-anchor="middle" font-size="9" fill="#e00000" font-family="Liberation Sans">X</text>
          <text x="56" y="805" text-anchor="middle" font-size="9" fill="#00c000" font-family="Liberation Sans">Y</text>
        </g>
      </svg>
    </div>
    <div class="rightpane d-flex flex-column">
      <div class="rhead d-flex align-items-center justify-content-between">
        <span>图素</span>
        <span class="d-flex align-items-center gap-2"><svg class="i12" viewBox="0 0 12 12"><path d="M1 3h10L6 9z" fill="#777"/></svg><svg class="i12" viewBox="0 0 12 12"><path d="M4 1h4M5 1v5M7 1v5M3 6h6M6 6v5" stroke="#666" fill="none"/></svg></span>
      </div>
      <div class="libbtns d-flex">
        <button type="button" class="btn libbtn"><svg class="i14" viewBox="0 0 14 14"><rect x="2" y="0.500" width="10" height="13" fill="#fff" stroke="#555"/><path d="M4 4h2v2H4zM8 4h2v2H8zM4 8h2v2H4zM8 8h2v2H8z" fill="#aaa"/></svg>新建</button>
        <button type="button" class="btn libbtn"><svg class="i14" viewBox="0 0 14 14"><path d="M1 1h7v12H1z" fill="#eee" stroke="#777"/><path d="M8 3l3 3v4l-3 3" fill="none" stroke="#999"/></svg>打开</button>
        <button type="button" class="btn libbtn"><svg class="i14" viewBox="0 0 14 14"><rect x="1" y="1" width="12" height="12" fill="#6b6b3c"/><rect x="3" y="1" width="8" height="5" fill="#ddd"/><rect x="4" y="8" width="6" height="5" fill="#333"/></svg>保存</button>
        <button type="button" class="btn libbtn"><svg class="i14" viewBox="0 0 14 14"><path d="M1 1h8v12H1z" fill="#eee" stroke="#888"/><path d="M9 9q2 2 0 4" fill="none" stroke="#888"/></svg>关闭</button>
      </div>
      <div class="libsearch d-flex align-items-center justify-content-between">
        <span>搜索...</span>
        <span class="libx"><svg class="i14" viewBox="0 0 14 14"><path d="M1 1l12 12M13 1L1 13" stroke="#f04a2f" stroke-width="2"/></svg></span>
      </div>
      <div class="libbox d-flex justify-content-between">
        <div class="libgrid">
          <div class="libcell"><svg class="i30"><use href="#g1"/></svg><span>长方体</span></div>
          <div class="libcell"><svg class="i32"><use href="#h1"/></svg><span>孔类长方体</span></div>
          <div class="libcell"><svg class="i30"><use href="#g2"/></svg><span>厚板</span></div>
          <div class="libcell"><svg class="i32"><use href="#h2"/></svg><span>孔类厚板</span></div>
          <div class="libcell"><svg class="i30"><use href="#g3"/></svg><span>键</span></div>
          <div class="libcell"><svg class="i32"><use href="#h3"/></svg><span>孔类键</span></div>
          <div class="libcell"><svg class="i30"><use href="#g4"/></svg><span>圆柱体</span></div>
          <div class="libcell"><svg class="i32"><use href="#h4"/></svg><span>孔类圆柱体</span></div>
          <div class="libcell"><svg class="i30"><use href="#g5"/></svg><span>椭圆柱</span></div>
          <div class="libcell"><svg class="i32"><use href="#h5"/></svg><span>孔类椭圆柱</span></div>
          <div class="libcell"><svg class="i30"><use href="#g6"/></svg><span>多棱体</span></div>
          <div class="libcell"><svg class="i32"><use href="#h6"/></svg><span>孔类多棱体</span></div>
          <div class="libcell"><svg class="i30"><use href="#g7"/></svg><span>球体</span></div>
          <div class="libcell"><svg class="i32"><use href="#h7"/></svg><span>孔类球体</span></div>
          <div class="libcell"><svg class="i30"><use href="#g8"/></svg><span>饼状体</span></div>
          <div class="libcell"><svg class="i32"><use href="#h8"/></svg><span>孔类饼状体</span></div>
          <div class="libcell"><svg class="i30"><use href="#g9"/></svg><span>圆环</span></div>
          <div class="libcell"><svg class="i32"><use href="#h9"/></svg><span>孔类圆环</span></div>
          <div class="libcell"><svg class="i30"><use href="#g10"/></svg><span>圆锥体</span></div>
          <div class="libcell"><svg class="i32"><use href="#h10"/></svg><span>孔类圆锥体</span></div>
        </div>
        <div class="vscroll d-flex flex-column">
          <div class="vsbtn"><svg class="i12" viewBox="0 0 12 12"><path d="M2 8l4-4 4 4" fill="none" stroke="#555" stroke-width="1.600"/></svg></div>
          <div class="vsthumb"></div>
          <div class="vsbtn mt-auto"><svg class="i12" viewBox="0 0 12 12"><path d="M2 4l4 4 4-4" fill="none" stroke="#555" stroke-width="1.600"/></svg></div>
        </div>
      </div>
      <div class="libfoot d-flex">
        <div class="backbtn d-flex align-items-center"><svg class="i14" viewBox="0 0 14 14"><path d="M1 7l6-5v3h6v4H7v3z" fill="#eee"/></svg>返回</div>
        <button type="button" class="btn morebtn">更多图素库</button>
        <div class="plainb"></div>
      </div>
      <div class="rtabs d-flex align-items-start">
        <div class="rtabx on">图素</div><div class="rtabx">高级图素</div><div class="rtabx">钣金</div><div class="rtabx">工具</div>
        <div class="ms-auto align-self-center"><svg class="i12" viewBox="0 0 12 12"><path d="M1 3h10L6 9z" fill="#777"/><path d="M1 1h10" stroke="#777"/></svg></div>
      </div>
    </div>
  </div>

  <div class="statbar d-flex align-items-center">
    <div class="stext">选择或修改要用于操作的草图.右键单击可查看其它选项.</div>
    <div class="ssize">视图尺寸: 1479 x&nbsp; 832</div>
    <div class="sunit d-flex align-items-center"><svg class="i12" viewBox="0 0 12 12"><path d="M3 1h6v10H3z" fill="#eee" stroke="#ccc"/><path d="M3 3h3M3 5h2M3 7h3M3 9h2" stroke="#bbb"/></svg>单位:<b>mm, deg</b></div>
    <div class="sic"><svg class="i16" viewBox="0 0 16 16"><circle cx="6.500" cy="6.500" r="5" fill="#f4f4f4" stroke="#888"/><path d="M10 10l5 5" stroke="#777" stroke-width="2"/><path d="M4 6.500h5M6.500 4v5" stroke="#aaa"/></svg></div>
    <div class="sic gap4"><svg class="i16" viewBox="0 0 16 16"><circle cx="6.500" cy="6.500" r="5" fill="#f4f4f4" stroke="#888"/><path d="M10 10l5 5" stroke="#777" stroke-width="2"/></svg></div>
    <div class="sar"><span class="tribar"></span></div>
    <div class="sic"><svg class="i16" viewBox="0 0 16 16"><path d="M1 5h9v10H1z" fill="#f0c820" stroke="#666"/><path d="M1 5l3-3h9l-3 3zM10 5l3-3v9l-3 3z" fill="#eadf98" stroke="#666"/><circle cx="13" cy="8" r="1.200" fill="#d33"/></svg></div>
    <div class="sar"><span class="tribar"></span></div>
    <div class="sic"><svg class="i18" viewBox="0 0 18 18"><path d="M2 6h10v11H2z" fill="#4e8fd0" stroke="#2f6aa8"/><path d="M2 6l4-4h10l-4 4zM12 6l4-4v11l-4 4z" fill="#dce6f0" stroke="#8aa"/></svg></div>
    <div class="sar"><span class="tribar"></span></div>
    <div class="sic"><svg class="i16" viewBox="0 0 16 16"><path d="M7 1v6" stroke="#666" stroke-dasharray="1 1"/><rect x="6" y="7" width="8" height="8" fill="#1b4f9a"/><circle cx="4" cy="7" r="2.500" fill="#5aa6e0"/><rect x="8" y="9" width="3" height="3" fill="#fff"/></svg></div>
    <div class="sar"><span class="tribar"></span></div>
    <div class="sic"><svg class="i16" viewBox="0 0 16 16"><path d="M1 15L5 5l10-4-3 14z" fill="#88a8cc" stroke="#6c8cb0"/><path d="M5 5l7 0 3-4" fill="none" stroke="#dce6f0"/></svg></div>
    <div class="sic gap3"><svg class="i18" viewBox="0 0 18 18"><circle cx="5" cy="12" r="3.500" fill="#eef6fa" stroke="#888"/><circle cx="12.500" cy="12" r="3.500" fill="#eef6fa" stroke="#888"/><path d="M2 10l3-7M15.500 10l1-6" stroke="#888" fill="none"/></svg></div>
    <div class="sar tiny"><span class="tribar"></span></div>
    <div class="sic gap3"><svg class="i18" viewBox="0 0 18 18"><path d="M2 6h10v11H2z" fill="#3f82c8" stroke="#1e5a98"/><path d="M2 6l4-4h10l-4 4z" fill="#6aa4dc" stroke="#1e5a98"/><path d="M12 6l4-4v11l-4 4z" fill="#2f6aa8" stroke="#1e5a98"/></svg></div>
    <div class="sar tiny"><span class="tribar"></span></div>
    <div class="sic gap4"><svg class="i16" viewBox="0 0 16 16"><path d="M6 1l6 6H9l3 6-2 1-3-6-2 3z" fill="#ddd" stroke="#bbb"/></svg></div>
    <div class="sact"><svg class="i16" viewBox="0 0 16 16"><path d="M5 1v12l3-3 2 5 2-1-2-5h4z" fill="#fff" stroke="#333"/></svg></div>
    <div class="sic"><svg class="i16" viewBox="0 0 16 16"><rect x="1" y="1" width="9" height="9" fill="#fff" stroke="#ccc"/><path d="M8 5v9l2-2 1 3 2-1-1-3h3z" fill="#fff" stroke="#555"/></svg></div>
    <div class="scmb c1"><span>缺省</span><span class="tribar"></span></div>
    <div class="scmb c2"><span>智能图素</span><span class="tribar"></span></div>
    <div class="scmb c3"><span>Default</span><span class="tribar"></span></div>
    <div class="stail d-flex align-items-center"><svg class="i16" viewBox="0 0 16 16"><path d="M6 1h4v4H6zM1 11h5v4H1zM10 11h5v4h-5z" fill="#ddd" stroke="#bbb"/><path d="M8 5v3M3 11V8h10v3" fill="none" stroke="#bbb"/></svg><svg class="i12 ms-1" viewBox="0 0 12 12"><path d="M9 1h2v2H9zM5 5h2v2H5zM9 5h2v2H9zM1 9h2v2H1zM5 9h2v2H5zM9 9h2v2H9z" fill="#bbb"/></svg></div>
  </div>
</div>
</body>
</html>
